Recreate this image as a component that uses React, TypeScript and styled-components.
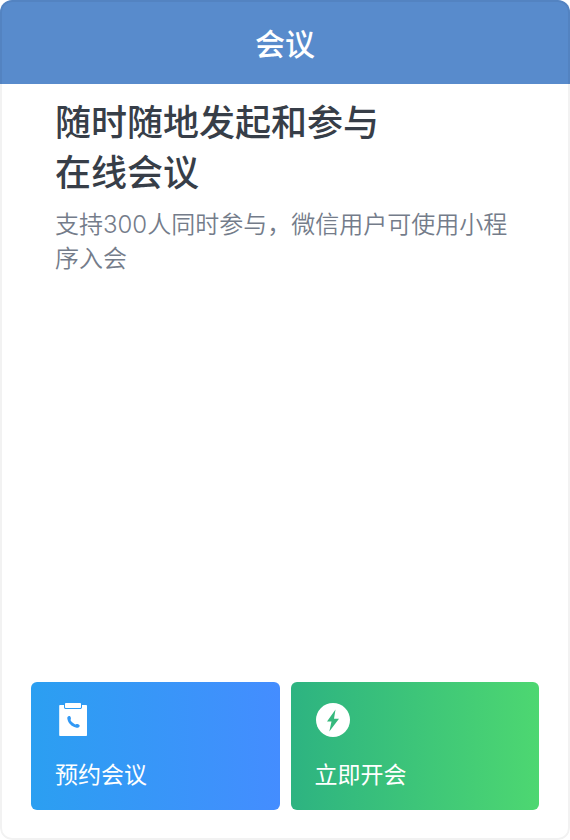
import React from "react";
import styled, { createGlobalStyle } from "styled-components";

const GlobalStyle = createGlobalStyle`
  * { box-sizing: border-box; }
  body {
    margin: 0;
    background: #fff;
    font-family: Inter, "Noto Sans CJK SC", sans-serif;
  }
`;

const Screen = styled.div`
  position: relative;
  display: flex;
  flex-direction: column;
  min-height: 100vh;
  border-radius: 12px;
  overflow: hidden;
  background: #fff;

  &::after {
    content: "";
    position: absolute;
    inset: 0;
    border: 2px solid rgba(0, 0, 0, 0.05);
    border-radius: 12px;
    pointer-events: none;
  }
`;

const Header = styled.header`
  display: flex;
  align-items: center;
  justify-content: center;
  padding: 24px 0 20px;
  background: #588bcc;
`;

const HeaderTitle = styled.h1`
  margin: 0;
  font-size: 30px;
  line-height: 40px;
  font-weight: 500;
  color: #fff;
`;

const Intro = styled.main`
  flex: 1;
  padding: 14px 55px;
`;

const Headline = styled.h2`
  margin: 0;
  font-size: 36px;
  line-height: 50px;
  font-weight: 500;
  color: #373e48;
`;

const Description = styled.p`
  margin: 10px 0 0;
  font-size: 24px;
  line-height: 34px;
  font-weight: 350;
  color: #747c8a;
`;

const Actions = styled.footer`
  display: grid;
  grid-template-columns: 1fr 1fr;
  gap: 11px;
  padding: 0 31px 30px;
`;

const ActionButton = styled.button<{ $from: string; $to: string }>`
  display: flex;
  flex-direction: column;
  align-items: flex-start;
  gap: 21px;
  padding: 21px 24px 17px;
  border: 0;
  border-radius: 6px;
  background: linear-gradient(90deg, ${(p) => p.$from}, ${(p) => p.$to});
  color: #fff;
  font-family: inherit;
  font-size: 23px;
  line-height: 35px;
  font-weight: 400;
  cursor: pointer;
`;

const Icon = styled.svg`
  display: block;
  width: 36px;
  height: 34px;
`;

const ClipboardPhoneIcon = () => (
  <Icon viewBox="0 0 36 34" aria-hidden="true">
    <path
      fill="#fff"
      d="M5 2h4v2.200c0 1.100.8 1.800 1.800 1.800h14.400c1 0 1.800-.7 1.800-1.800V2h4.200c.5 0 .8.400.8.800v29.400c0 .5-.3.800-.8.800H5c-.5 0-.8-.3-.8-.8V2.800c0-.4.300-.8.800-.8Z"
    />
    <rect x="10" y="0" width="16" height="5" rx=".8" fill="#fff" />
    <path
      fill="#3299f5"
      d="M13.400 13.200c1-.6 1.900-.1 2.300 1 .4 1.300.3 2.200-.3 2.900 1.200 2 2.800 3.500 4.900 4.400.8-.7 1.700-.7 2.900-.2 1.300.6 1.900 1.400 1.300 2.300-.7 1.200-2.200 1.500-3.600 1-4.500-1.500-7.700-4.500-8.500-8.700-.3-1.200 0-2.200 1-2.700Z"
    />
  </Icon>
);

const LightningIcon = () => (
  <Icon viewBox="0 0 36 34" aria-hidden="true">
    <circle cx="18" cy="17" r="17" fill="#fff" />
    <path fill="#36b97d" d="M20.500 6.500 12 18.500h4.500l-2.200 10L24 15.800h-5Z" />
  </Icon>
);

export default function App() {
  return (
    <>
      <GlobalStyle />
      <Screen lang="zh-CN">
        <Header>
          <HeaderTitle>会议</HeaderTitle>
        </Header>
        <Intro>
          <Headline>
            随时随地发起和参与
            <br />
            在线会议
          </Headline>
          <Description>支持300人同时参与，微信用户可使用小程序入会</Description>
        </Intro>
        <Actions>
          <ActionButton type="button" $from="#2b9ff1" $to="#448dff">
            <ClipboardPhoneIcon />
            预约会议
          </ActionButton>
          <ActionButton type="button" $from="#2db381" $to="#4dd771">
            <LightningIcon />
            立即开会
          </ActionButton>
        </Actions>
      </Screen>
    </>
  );
}
